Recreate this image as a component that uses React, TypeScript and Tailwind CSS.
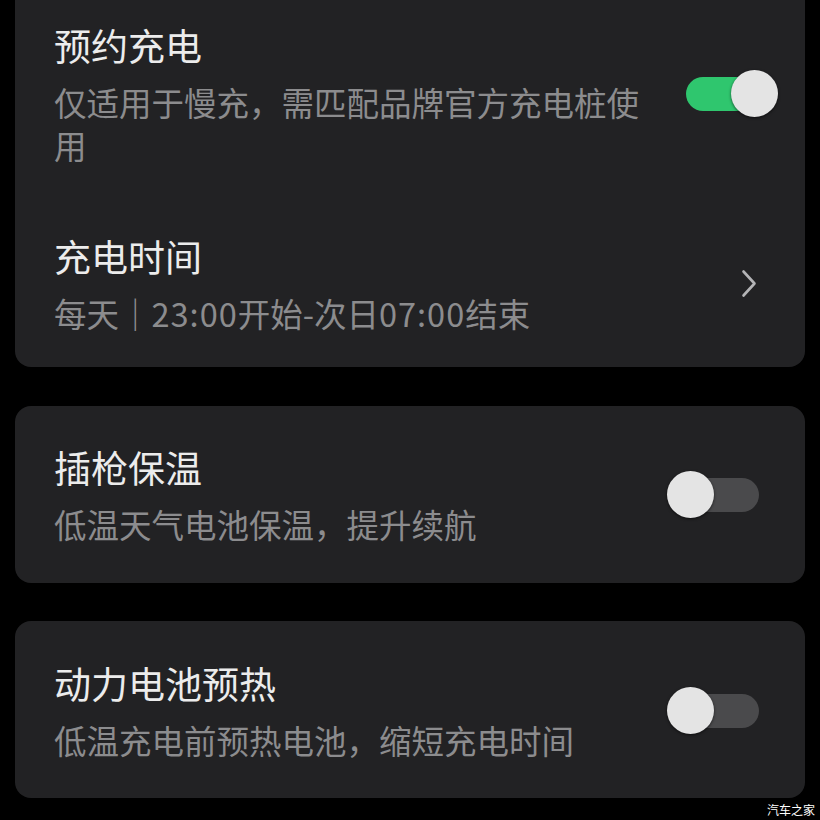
import React from "react";

const font = { fontFamily: '"Noto Sans CJK SC", "Noto Sans", sans-serif' };

function Toggle({ on }: { on: boolean }) {
  return (
    <div className="relative w-[111px] h-[47px] shrink-0">
      <div
        className={`absolute left-[19px] top-[7px] w-[73px] h-[34px] rounded-full ${
          on ? "bg-[#2fc66e]" : "bg-[#4a4a4c]"
        }`}
      />
      <div
        className={`absolute top-0 w-[47px] h-[47px] rounded-full bg-[#e4e4e4] shadow-[0_1px_3px_rgba(0,0,0,0.6)] ${
          on ? "left-[64px]" : "left-0"
        }`}
      />
    </div>
  );
}

function Texts({ title, sub }: { title: string; sub: React.ReactNode }) {
  return (
    <div className="flex-1 min-w-0">
      <div className="text-[37px] leading-[48px] text-[#ececec]">{title}</div>
      <div className="mt-[11px] text-[32.5px] leading-[43px] text-[#8c8c8e]">{sub}</div>
    </div>
  );
}

export default function App() {
  return (
    <div className="relative w-[820px] h-[820px] overflow-hidden bg-black" style={font}>
      <div className="flex flex-col gap-[39px] px-[15px] -mt-[16px]">
        <div className="rounded-[16px] bg-[#222224] pt-[37px] pb-[33px] pl-[39px] pr-[27px]">
          <div className="flex items-center gap-[24px]">
            <Texts title="预约充电" sub="仅适用于慢充，需匹配品牌官方充电桩使用" />
            <Toggle on />
          </div>
          <div className="mt-[66px] flex items-center gap-[24px] pr-[21px]">
            <Texts
              title="充电时间"
              sub={
                <>
                  每天｜<span className="tracking-[1px]">23:00</span>开始-次日
                  <span className="tracking-[1px]">07:00</span>结束
                </>
              }
            />
            <svg width="16" height="29" viewBox="0 0 16 29" className="shrink-0">
              <polyline
                points="2.5,2.5 13.5,14.5 2.5,26.5"
                fill="none"
                stroke="#b4b4b6"
                strokeWidth="2.6"
                strokeLinecap="round"
                strokeLinejoin="round"
              />
            </svg>
          </div>
        </div>
        <div className="rounded-[16px] bg-[#222224] pt-[37px] pb-[38px] pl-[39px] pr-[27px] flex items-center gap-[24px]">
          <Texts title="插枪保温" sub="低温天气电池保温，提升续航" />
          <Toggle on={false} />
        </div>
        <div className="-mt-px rounded-[16px] bg-[#222224] pt-[38px] pb-[37px] pl-[39px] pr-[27px] flex items-center gap-[24px]">
          <Texts title="动力电池预热" sub="低温充电前预热电池，缩短充电时间" />
          <Toggle on={false} />
        </div>
      </div>
      <div className="absolute right-[5px] bottom-[3px] text-[12px] leading-[14px] text-white">汽车之家</div>
    </div>
  );
}
